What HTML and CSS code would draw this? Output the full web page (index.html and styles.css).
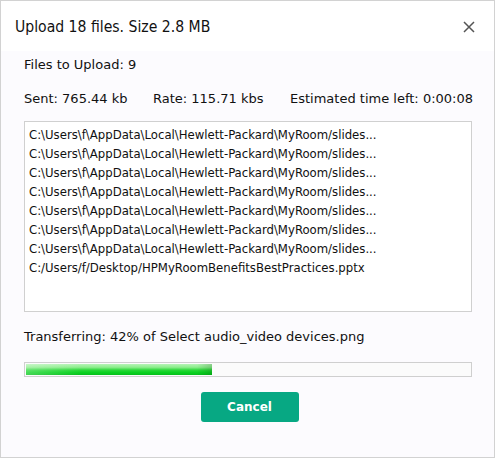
FILE: index.html
```html
<!DOCTYPE html>
<html>
<head>
<meta charset="utf-8">
<link rel="stylesheet" href="styles.css">
</head>
<body>
<div class="dialog">
  <div class="header">
    <div class="title">Upload 18 files. Size 2.8 MB</div>
    <svg class="close" width="12" height="12" viewBox="0 0 12 12"><path d="M1 1L11 11M11 1L1 11" stroke="#555" stroke-width="1.5" fill="none"/></svg>
  </div>
  <div class="content">
    <div class="line files">Files to Upload: 9</div>
    <div class="stats">
      <span class="sent">Sent: 765.44 kb</span>
      <span class="rate">Rate: 115.71 kbs</span>
      <span class="eta">Estimated time left: 0:00:08</span>
    </div>
    <div class="list">
      <div class="row">C:\Users\f\AppData\Local\Hewlett-Packard\MyRoom/slides...</div>
      <div class="row">C:\Users\f\AppData\Local\Hewlett-Packard\MyRoom/slides...</div>
      <div class="row">C:\Users\f\AppData\Local\Hewlett-Packard\MyRoom/slides...</div>
      <div class="row">C:\Users\f\AppData\Local\Hewlett-Packard\MyRoom/slides...</div>
      <div class="row">C:\Users\f\AppData\Local\Hewlett-Packard\MyRoom/slides...</div>
      <div class="row">C:\Users\f\AppData\Local\Hewlett-Packard\MyRoom/slides...</div>
      <div class="row">C:\Users\f\AppData\Local\Hewlett-Packard\MyRoom/slides...</div>
      <div class="row">C:/Users/f/Desktop/HPMyRoomBenefitsBestPractices.pptx</div>
    </div>
    <div class="line transfer">Transferring: 42% of Select audio_video devices.png</div>
    <div class="progress"><div class="fill" style="width:42%"></div></div>
    <div class="actions"><button class="cancel">Cancel</button></div>
  </div>
</div>
</body>
</html>
```
FILE: styles.css
```css
html, body {
  margin: 0;
  padding: 0;
  background: #ffffff;
}
body {
  font-family: "DejaVu Sans Condensed", "DejaVu Sans", sans-serif;
  color: #111;
}
.dialog {
  width: 493px;
  height: 456px;
  border: 1px solid #d2d2d2;
  background: #fcfbfe;
  box-sizing: content-box;
}
.header {
  height: 50px;
  display: flex;
  align-items: center;
  justify-content: space-between;
  padding: 0 19px 0 14px;
  background: #ffffff;
}
.title {
  font-size: 15.6px;
  margin-top: 2px;
}
.close {
  margin-top: 2px;
}
.content {
  padding: 0 22px 0 23px;
  font-size: 13px;
}
.line, .stats {
  font-family: "DejaVu Sans", Verdana, sans-serif;
  font-size: 13px;
  height: 16px;
  line-height: 16px;
  white-space: nowrap;
}
.files {
  margin-top: 6px;
}
.stats {
  margin-top: 18px;
  display: flex;
}
.sent { width: 129px; flex: none; }
.rate { width: 137px; flex: none; }
.eta { flex: none; }
.list {
  margin-top: 14px;
  border: 1px solid #d0d0d0;
  background: #ffffff;
  padding: 3px 4px;
  box-sizing: border-box;
  height: 191px;
}
.row {
  height: 19px;
  line-height: 19px;
  white-space: nowrap;
}
.transfer {
  margin-top: 17px;
}
.progress {
  margin-top: 17px;
  height: 15px;
  border: 1px solid #cfcfcf;
  background: #fbfbfb;
  box-sizing: border-box;
  padding: 1px;
}
.fill {
  height: 100%;
  background:
    linear-gradient(to right, rgba(255,255,255,0.25), rgba(255,255,255,0) 30%, rgba(0,0,0,0) 92%, rgba(0,60,0,0.2)),
    linear-gradient(to bottom, #b6f3b6 0%, #8ced8c 30%, #2cd83a 55%, #0bd322 75%, #06bf1b 100%);
}
.actions {
  display: flex;
  justify-content: center;
  margin-top: 15px;
}
.cancel {
  width: 98px;
  height: 30px;
  border: none;
  border-radius: 3px;
  background: #07a883;
  color: #ffffff;
  font-family: "DejaVu Sans", Verdana, sans-serif;
  font-weight: bold;
  font-size: 12px;
  padding: 0;
  margin-left: 3px;
}
```
